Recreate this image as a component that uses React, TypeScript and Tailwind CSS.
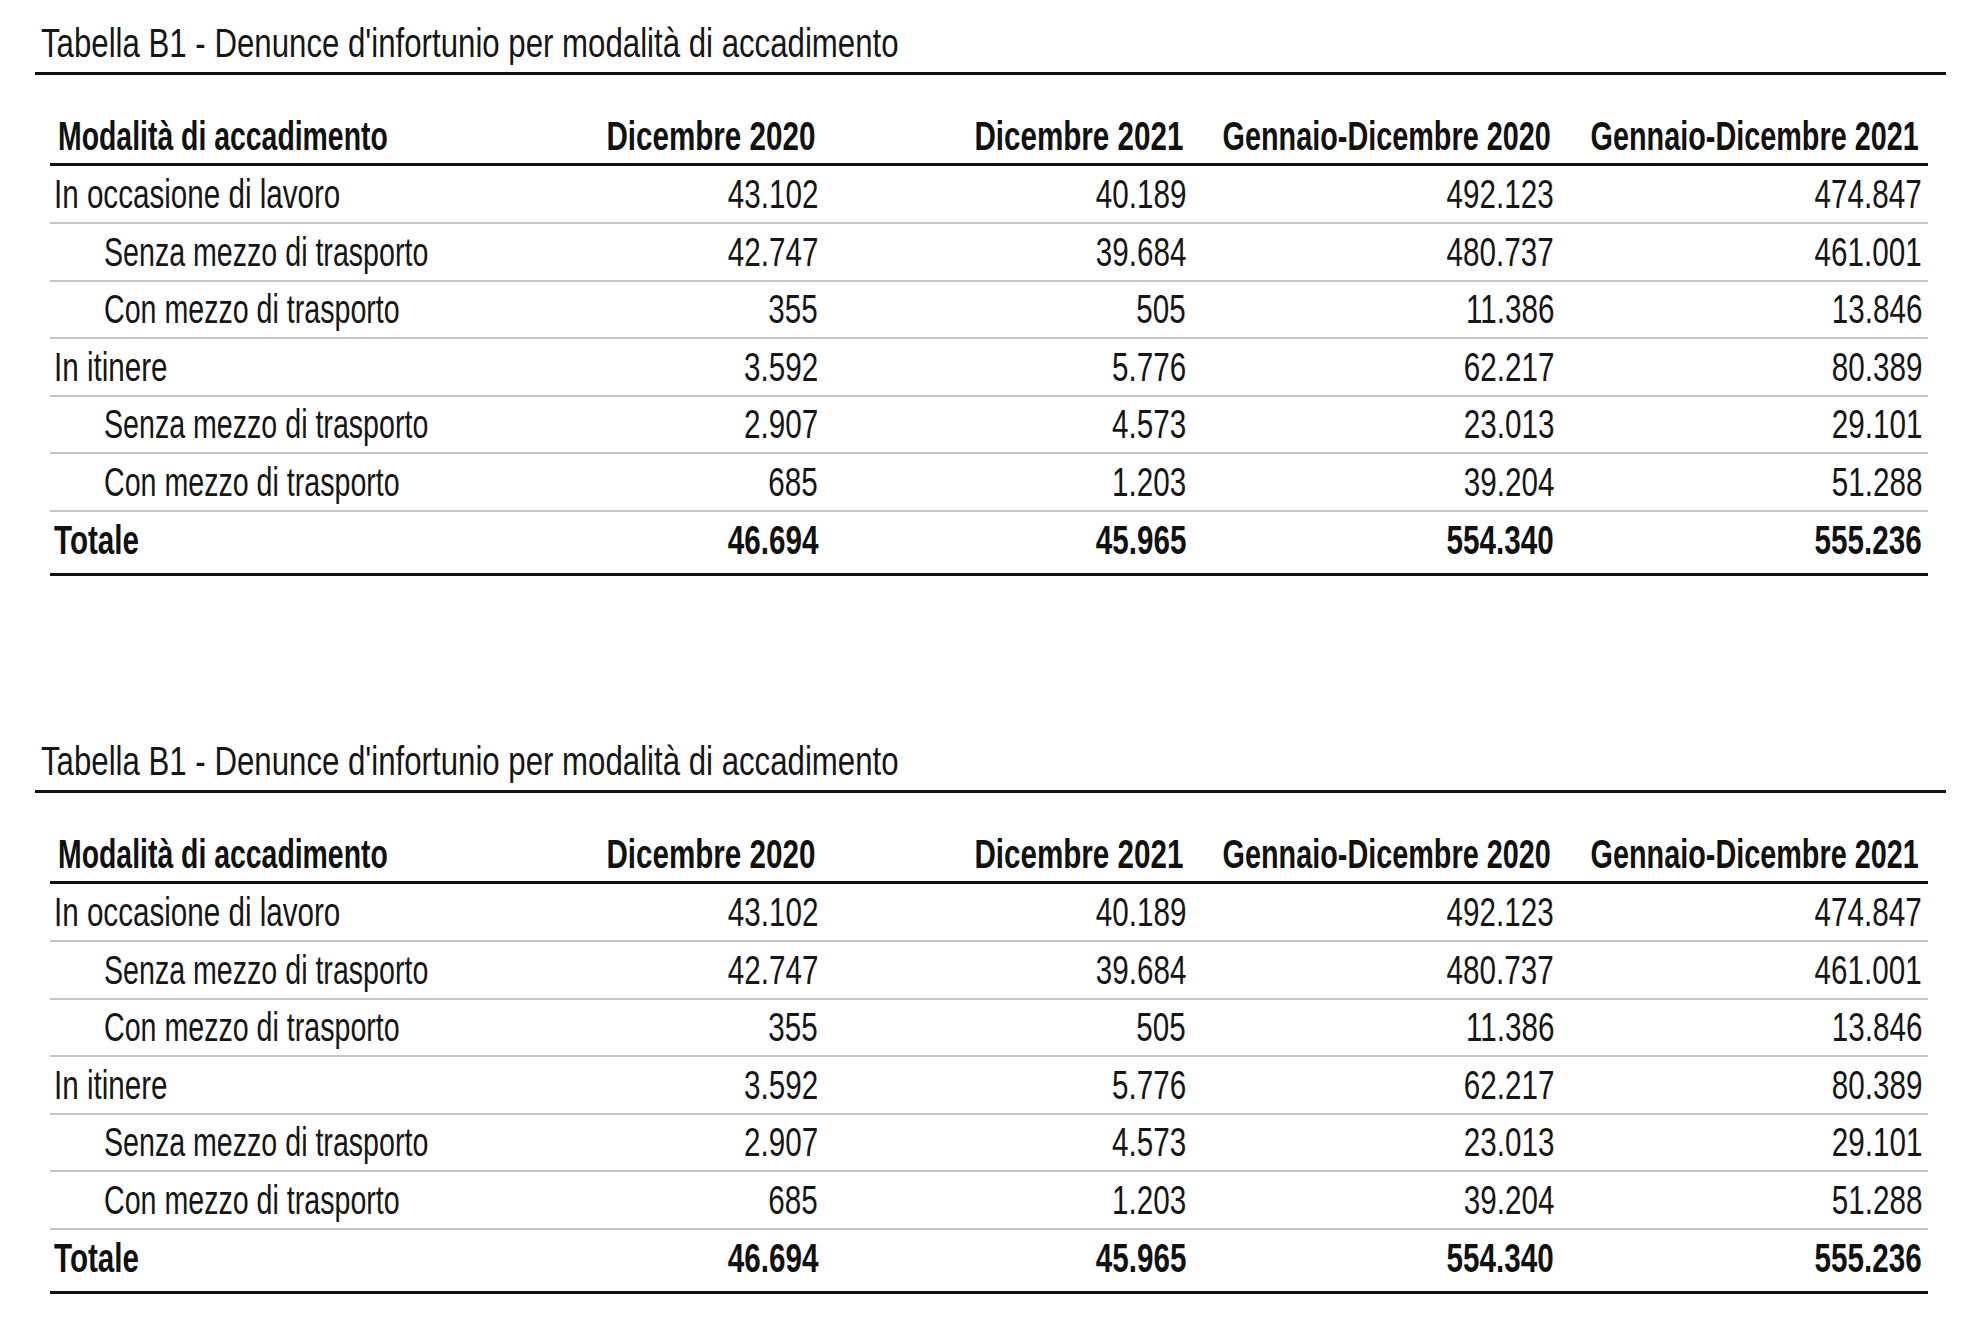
import React from "react";

type Row = { label: string; values: string[]; indent: boolean };

const rows: Row[] = [
  { label: "In occasione di lavoro", values: ["43.102", "40.189", "492.123", "474.847"], indent: false },
  { label: "Senza mezzo di trasporto", values: ["42.747", "39.684", "480.737", "461.001"], indent: true },
  { label: "Con mezzo di trasporto", values: ["355", "505", "11.386", "13.846"], indent: true },
  { label: "In itinere", values: ["3.592", "5.776", "62.217", "80.389"], indent: false },
  { label: "Senza mezzo di trasporto", values: ["2.907", "4.573", "23.013", "29.101"], indent: true },
  { label: "Con mezzo di trasporto", values: ["685", "1.203", "39.204", "51.288"], indent: true },
];

const totals = ["46.694", "45.965", "554.340", "555.236"];
const headers = ["Dicembre 2020", "Dicembre 2021", "Gennaio-Dicembre 2020", "Gennaio-Dicembre 2021"];

const gridCols = "grid grid-cols-[406px_368px_368px_368px_368px]";

function R({ children, narrow }: { children: React.ReactNode; narrow?: boolean }) {
  return (
    <span
      className={`inline-block shrink-0 origin-right whitespace-nowrap ${narrow ? "scale-x-[0.72]" : "scale-x-[0.74]"}`}
    >
      {children}
    </span>
  );
}

function Tabella() {
  return (
    <div className="w-[1911px]">
      <div className="h-[53px] border-b-[3px] border-[#111] pl-[6px] text-[41px] leading-[42px] text-[#161616]">
        <span className="inline-block origin-left scale-x-[0.761] whitespace-nowrap">
          Tabella B1 - Denunce d'infortunio per modalità di accadimento
        </span>
      </div>
      <div className="ml-[15px] w-[1878px]">
        <div className={`${gridCols} h-[91px] items-end border-b-[3px] border-[#111] pb-[7px] text-[40px] font-bold leading-[40px] text-[#111]`}>
          <div className="pl-[8px]">
            <span className="inline-block origin-left scale-x-[0.71] whitespace-nowrap">Modalità di accadimento</span>
          </div>
          {headers.map((h, k) => (
            <div key={h} className="flex justify-end pr-[9px]">
              <R narrow={k >= 2}>{h}</R>
            </div>
          ))}
        </div>
        {rows.map((r, i) => (
          <div
            key={i}
            className={`${gridCols} ${i === 0 ? "h-[58px]" : "h-[57.5px]"} items-center border-b-2 border-[#c4c4c4] text-[40px] leading-[40px] text-[#161616]`}
          >
            <div className={r.indent ? "pl-[54px]" : "pl-[4px]"}>
              <span
                className={`inline-block origin-left whitespace-nowrap ${r.indent ? "scale-x-[0.715]" : "scale-x-[0.74]"}`}
              >
                {r.label}
              </span>
            </div>
            {r.values.map((v, j) => (
              <div key={j} className="flex justify-end pr-[6px]">
                <R>{v}</R>
              </div>
            ))}
          </div>
        ))}
        <div className={`${gridCols} h-[64.5px] items-center border-b-[3px] border-[#111] pb-[4px] text-[40px] font-bold leading-[40px] text-[#111]`}>
          <div className="pl-[4px]">
            <span className="inline-block origin-left scale-x-[0.74] whitespace-nowrap">Totale</span>
          </div>
          {totals.map((v, j) => (
            <div key={j} className="flex justify-end pr-[6px]">
              <R>{v}</R>
            </div>
          ))}
        </div>
      </div>
    </div>
  );
}

export default function App() {
  return (
    <div
      className="flex h-[1323px] w-[1973px] flex-col gap-[164px] bg-white pl-[35px] pt-[22px]"
      style={{ fontFamily: "'Liberation Sans', Arial, sans-serif" }}
    >
      <Tabella />
      <Tabella />
    </div>
  );
}
